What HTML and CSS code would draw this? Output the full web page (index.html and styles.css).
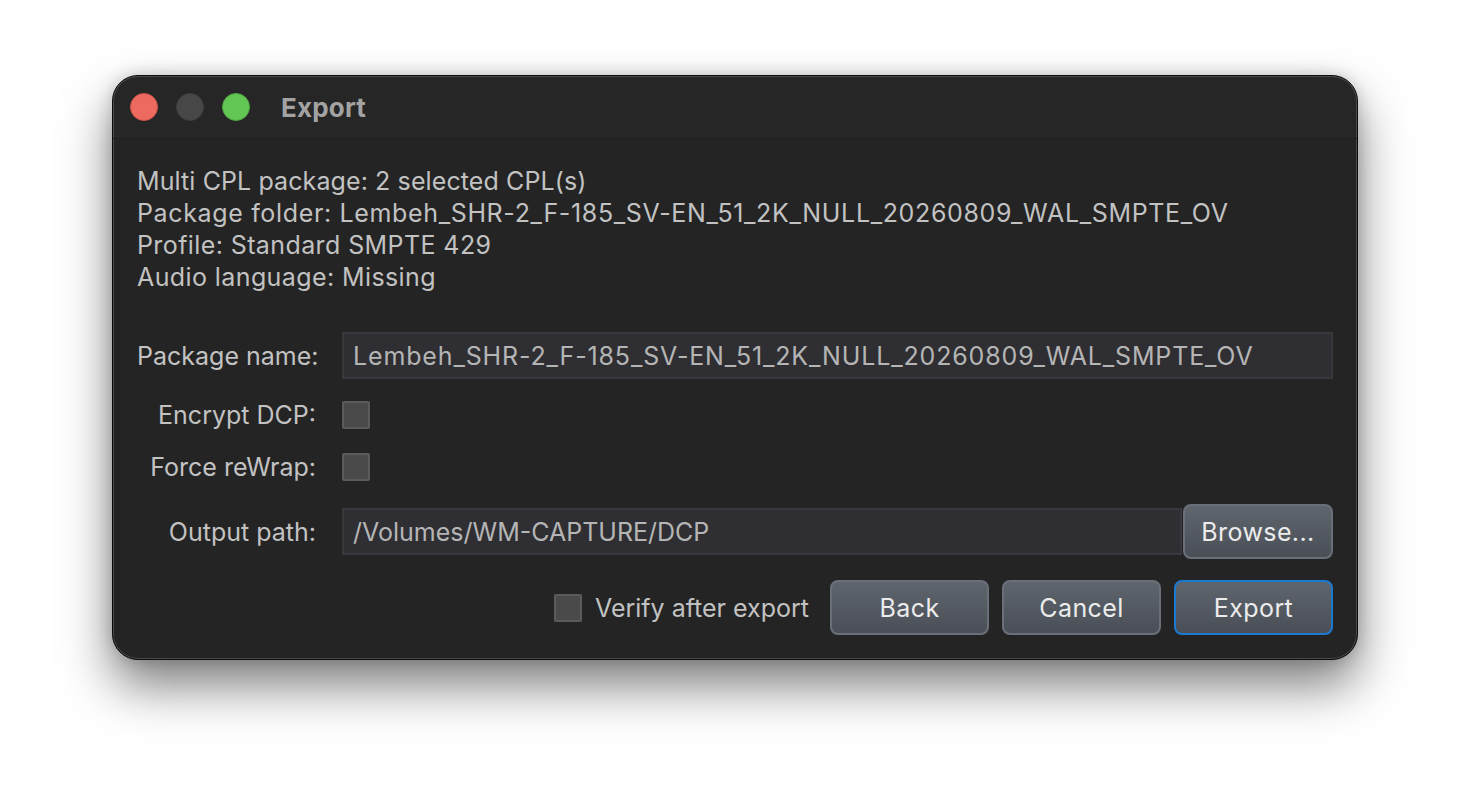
FILE: index.html
```html
<!DOCTYPE html>
<html>
<head>
<meta charset="utf-8">
<title>Export</title>
<link rel="stylesheet" href="styles.css">
</head>
<body>
<div class="window">
  <div class="titlebar">
    <div class="lights">
      <span class="light red"></span>
      <span class="light gray"></span>
      <span class="light green"></span>
    </div>
    <div class="title">Export</div>
  </div>
  <div class="content">
    <div class="info">
      <div class="tight">Multi CPL package: 2 selected CPL(s)</div>
      <div class="wide">Package folder: Lembeh_SHR-2_F-185_SV-EN_51_2K_NULL_20260809_WAL_SMPTE_OV</div>
      <div>Profile: Standard SMPTE 429</div>
      <div>Audio language: Missing</div>
    </div>
    <div class="form">
      <div class="row row-name">
        <label class="lbl">Package name:</label>
        <div class="field name">Lembeh_SHR-2_F-185_SV-EN_51_2K_NULL_20260809_WAL_SMPTE_OV</div>
      </div>
      <div class="row row-check first">
        <label class="lbl">Encrypt DCP:</label>
        <span class="check"></span>
      </div>
      <div class="row row-check">
        <label class="lbl">Force reWrap:</label>
        <span class="check"></span>
      </div>
      <div class="row row-path">
        <label class="lbl">Output path:</label>
        <div class="pathgroup">
          <div class="field path">/Volumes/WM-CAPTURE/DCP</div>
          <button class="btn browse">Browse...</button>
        </div>
      </div>
    </div>
    <div class="actions">
      <label class="verify"><span class="check"></span><span>Verify after export</span></label>
      <button class="btn act">Back</button>
      <button class="btn act">Cancel</button>
      <button class="btn act default">Export</button>
    </div>
  </div>
</div>
</body>
</html>
```
FILE: styles.css
```css
html, body {
  margin: 0;
  padding: 0;
  background: #ffffff;
}
body {
  width: 1470px;
  height: 808px;
  overflow: hidden;
  font-family: "Inter", "Liberation Sans", sans-serif;
}
.window {
  margin: 75px 0 0 112px;
  width: 1246px;
  height: 585px;
  box-sizing: border-box;
  background: #242424;
  border: 1px solid #0c0c0c;
  border-radius: 26px;
  box-shadow: inset 0 0 0 1px #4a4a4a, 0 26px 50px rgba(0, 0, 0, 0.5), 0 0 16px rgba(0, 0, 0, 0.18);
  display: flex;
  flex-direction: column;
  overflow: hidden;
}
.titlebar {
  height: 62px;
  flex: none;
  display: flex;
  align-items: center;
  background: #262626;
  border-bottom: 1px solid #1f1f1f;
  border-radius: 25px 25px 0 0;
  box-shadow: inset 0 1px 0 #4a4a4a, inset 1px 0 0 #4a4a4a, inset -1px 0 0 #4a4a4a;
  padding-left: 17px;
}
.lights {
  display: flex;
  gap: 18px;
}
.light {
  width: 28px;
  height: 28px;
  border-radius: 50%;
  box-sizing: border-box;
}
.red { background: #ec6a5f; border: 1px solid #d2554b; }
.gray { background: #474747; border: 1px solid #3f3f3f; }
.green { background: #62c655; border: 1px solid #50a744; }
.title {
  margin-left: 31px;
  font-size: 26px;
  font-weight: 700;
  color: #a3a3a3;
  letter-spacing: 0.2px;
}
.content {
  padding: 26px 24px 0 24px;
  color: #c2c2c2;
  font-size: 25px;
  letter-spacing: 0.4px;
}
.info {
  line-height: 32px;
}
.info .tight {
  letter-spacing: 0.1px;
}
.info .wide {
  letter-spacing: 0.65px;
}
.form {
  margin-top: 39px;
}
.row {
  display: grid;
  grid-template-columns: 179px 1fr;
  column-gap: 26px;
  align-items: center;
}
.lbl {
  text-align: right;
  white-space: nowrap;
  letter-spacing: 0;
}
.row-name {
  height: 47px;
}
.row-check {
  height: 28px;
  margin-top: 24px;
}
.row-check.first {
  margin-top: 21px;
}
.row-path {
  height: 55px;
  margin-top: 24px;
}
.field {
  height: 47px;
  box-sizing: border-box;
  background: #2f2f33;
  border: 2px solid #38383c;
  padding-left: 9px;
  display: flex;
  align-items: center;
  color: #b5b5b5;
  white-space: nowrap;
  overflow: hidden;
}
.field.name {
  letter-spacing: 0.85px;
}
.field.path {
  letter-spacing: 0;
}
.check {
  display: block;
  width: 28px;
  height: 28px;
  box-sizing: border-box;
  background: #4a4a4a;
  border: 2px solid #5b5b5b;
  border-radius: 2px;
}
.pathgroup {
  display: flex;
  align-items: center;
}
.path {
  flex: 1;
}
.btn {
  font-family: inherit;
  font-size: 25px;
  letter-spacing: 0.4px;
  color: #ececec;
  background: linear-gradient(#5f656d, #4a4f57);
  border: 2px solid #6a7079;
  border-radius: 8px;
  box-sizing: border-box;
  padding: 0;
  margin: 0;
}
.browse {
  width: 150px;
  height: 55px;
  margin-left: 1px;
}
.actions {
  margin-top: 21px;
  display: flex;
  justify-content: flex-end;
  align-items: center;
  gap: 13px;
}
.verify {
  display: flex;
  align-items: center;
  gap: 13px;
  margin-right: 8px;
  letter-spacing: 0;
}
.act {
  width: 159px;
  height: 55px;
}
.default {
  border-color: #1b7ad0;
}
```
